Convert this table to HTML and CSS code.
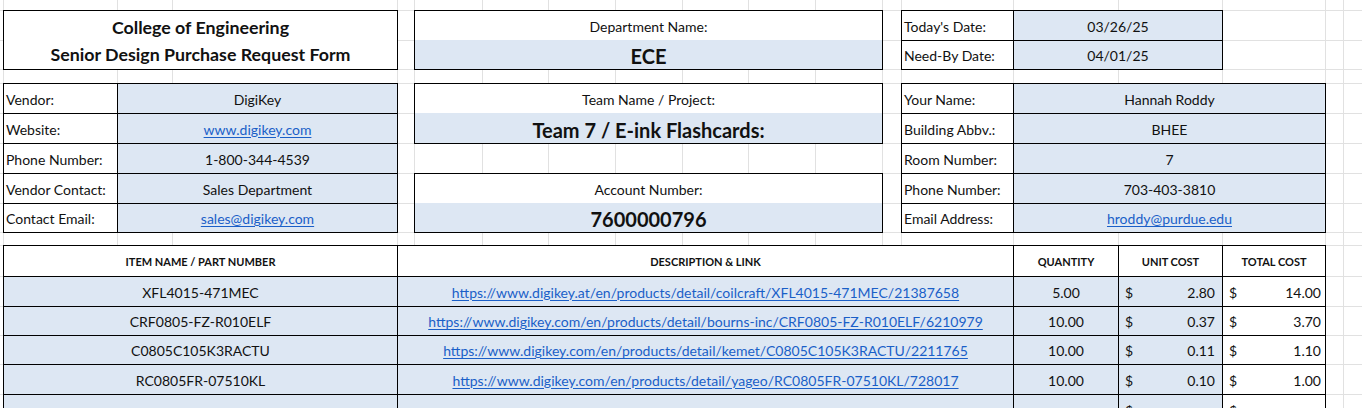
FILE: index.html
```html
<!DOCTYPE html>
<html lang="en">
<head>
<meta charset="utf-8">
<title>Senior Design Purchase Request Form</title>
<link rel="stylesheet" href="styles.css">
</head>
<body>
<main class="sheet">
  <section class="box title-box">
    <div class="cell title">College of Engineering</div>
    <div class="cell title second">Senior Design Purchase Request Form</div>
  </section>

  <section class="box stack dept-box">
    <div class="cell">Department Name:</div>
    <div class="cell fill big">ECE</div>
  </section>

  <section class="box pairs dates-box">
    <div class="cell label line">Today's Date:</div>
    <div class="cell fill line">03/26/25</div>
    <div class="cell label">Need-By Date:</div>
    <div class="cell fill">04/01/25</div>
  </section>

  <section class="box pairs five vendor-box">
    <div class="cell label line">Vendor:</div>
    <div class="cell fill line">DigiKey</div>
    <div class="cell label line">Website:</div>
    <div class="cell fill line"><a class="link" href="#">www.digikey.com</a></div>
    <div class="cell label line">Phone Number:</div>
    <div class="cell fill line">1-800-344-4539</div>
    <div class="cell label line">Vendor Contact:</div>
    <div class="cell fill line">Sales Department</div>
    <div class="cell label">Contact Email:</div>
    <div class="cell fill"><a class="link" href="#">sales@digikey.com</a></div>
  </section>

  <section class="box stack team-box">
    <div class="cell">Team Name / Project:</div>
    <div class="cell fill big">Team 7 / E-ink Flashcards:</div>
  </section>

  <section class="box stack account-box">
    <div class="cell">Account Number:</div>
    <div class="cell fill big">7600000796</div>
  </section>

  <section class="box pairs five person-box">
    <div class="cell label line">Your Name:</div>
    <div class="cell fill line">Hannah Roddy</div>
    <div class="cell label line">Building Abbv.:</div>
    <div class="cell fill line">BHEE</div>
    <div class="cell label line">Room Number:</div>
    <div class="cell fill line">7</div>
    <div class="cell label line">Phone Number:</div>
    <div class="cell fill line">703-403-3810</div>
    <div class="cell label">Email Address:</div>
    <div class="cell fill"><a class="link" href="#">hroddy@purdue.edu</a></div>
  </section>

  <section class="box items">
    <div class="th">ITEM NAME / PART NUMBER</div>
    <div class="th">DESCRIPTION &amp; LINK</div>
    <div class="th">QUANTITY</div>
    <div class="th">UNIT COST</div>
    <div class="th last">TOTAL COST</div>

    <div class="td fill">XFL4015-471MEC</div>
    <div class="td fill"><a class="link url" href="#">https://www.digikey.at/en/products/detail/coilcraft/XFL4015-471MEC/21387658</a></div>
    <div class="td fill">5.00</div>
    <div class="td fill money"><span>$</span><span>2.80</span></div>
    <div class="td money last"><span>$</span><span>14.00</span></div>

    <div class="td fill">CRF0805-FZ-R010ELF</div>
    <div class="td fill"><a class="link url" href="#">https://www.digikey.com/en/products/detail/bourns-inc/CRF0805-FZ-R010ELF/6210979</a></div>
    <div class="td fill">10.00</div>
    <div class="td fill money"><span>$</span><span>0.37</span></div>
    <div class="td money last"><span>$</span><span>3.70</span></div>

    <div class="td fill">C0805C105K3RACTU</div>
    <div class="td fill"><a class="link url" href="#">https://www.digikey.com/en/products/detail/kemet/C0805C105K3RACTU/2211765</a></div>
    <div class="td fill">10.00</div>
    <div class="td fill money"><span>$</span><span>0.11</span></div>
    <div class="td money last"><span>$</span><span>1.10</span></div>

    <div class="td fill">RC0805FR-07510KL</div>
    <div class="td fill"><a class="link url" href="#">https://www.digikey.com/en/products/detail/yageo/RC0805FR-07510KL/728017</a></div>
    <div class="td fill">10.00</div>
    <div class="td fill money"><span>$</span><span>0.10</span></div>
    <div class="td money last"><span>$</span><span>1.00</span></div>

    <div class="td fill"></div>
    <div class="td fill"></div>
    <div class="td fill"></div>
    <div class="td fill money"><span>$</span><span>-</span></div>
    <div class="td money last"><span>$</span><span>-</span></div>
  </section>
</main>
</body>
</html>
```

FILE: styles.css
```css
html, body {
  margin: 0;
  padding: 0;
  background: #fff;
}

body {
  height: 408px;
  overflow: hidden;
  font-family: "Lato", "Carlito", "Liberation Sans", sans-serif;
  font-size: 14px;
  color: #111;
}

.sheet {
  --g: linear-gradient(#e1e1e1, #e1e1e1);
  display: grid;
  width: 1362px;
  height: 424px;
  grid-template-columns: 3px 114px 55px 225px 17px 68px 66px 67px 67px 66px 67px 67px 19px 112px 105px 104px 103px 18px 19px;
  grid-template-rows: 10px 30px 29px 14px 30px 30px 30px 30px 29px 13px 31px 30px 29px 29px 30px 30px;
  background:
    var(--g) 3px 0 / 1px 100% no-repeat,
    var(--g) 117px 0 / 1px 100% no-repeat,
    var(--g) 172px 0 / 1px 100% no-repeat,
    var(--g) 397px 0 / 1px 100% no-repeat,
    var(--g) 414px 0 / 1px 100% no-repeat,
    var(--g) 482px 0 / 1px 100% no-repeat,
    var(--g) 548px 0 / 1px 100% no-repeat,
    var(--g) 615px 0 / 1px 100% no-repeat,
    var(--g) 682px 0 / 1px 100% no-repeat,
    var(--g) 748px 0 / 1px 100% no-repeat,
    var(--g) 815px 0 / 1px 100% no-repeat,
    var(--g) 882px 0 / 1px 100% no-repeat,
    var(--g) 901px 0 / 1px 100% no-repeat,
    var(--g) 1013px 0 / 1px 100% no-repeat,
    var(--g) 1118px 0 / 1px 100% no-repeat,
    var(--g) 1222px 0 / 1px 100% no-repeat,
    var(--g) 1325px 0 / 1px 100% no-repeat,
    var(--g) 1343px 0 / 1px 100% no-repeat,
    var(--g) 0 10px / 100% 1px no-repeat,
    var(--g) 0 40px / 100% 1px no-repeat,
    var(--g) 0 69px / 100% 1px no-repeat,
    var(--g) 0 83px / 100% 1px no-repeat,
    var(--g) 0 113px / 100% 1px no-repeat,
    var(--g) 0 143px / 100% 1px no-repeat,
    var(--g) 0 173px / 100% 1px no-repeat,
    var(--g) 0 203px / 100% 1px no-repeat,
    var(--g) 0 232px / 100% 1px no-repeat,
    var(--g) 0 245px / 100% 1px no-repeat,
    var(--g) 0 276px / 100% 1px no-repeat,
    var(--g) 0 306px / 100% 1px no-repeat,
    var(--g) 0 335px / 100% 1px no-repeat,
    var(--g) 0 364px / 100% 1px no-repeat,
    var(--g) 0 394px / 100% 1px no-repeat,
    #fff;
}

/* merged bordered blocks */
.box {
  display: grid;
  border: 1px solid #000;
  margin: 0 -1px -1px 0;
  background: #fff;
  min-width: 0;
  min-height: 0;
}

.title-box   { grid-column: 2 / 5;  grid-row: 2 / 4;  grid-template-rows: 29px 1fr; }
.dept-box    { grid-column: 6 / 13; grid-row: 2 / 4; }
.dates-box   { grid-column: 14 / 17; grid-row: 2 / 4; grid-template-rows: 30px 1fr; }
.vendor-box  { grid-column: 2 / 5;  grid-row: 5 / 10; }
.team-box    { grid-column: 6 / 13; grid-row: 5 / 7; }
.account-box { grid-column: 6 / 13; grid-row: 8 / 10; }
.person-box  { grid-column: 14 / 18; grid-row: 5 / 10; }
.items       { grid-column: 2 / 18; grid-row: 11 / 17; }

.stack { grid-template-rows: 29px 1fr; }
.pairs { grid-template-columns: 112px 1fr; }
.vendor-box.pairs { grid-template-columns: 114px 1fr; }
.five { grid-template-rows: 30px 30px 30px 30px 1fr; }

.cell {
  display: flex;
  align-items: center;
  justify-content: center;
  padding-top: 1px;
  box-sizing: border-box;
  white-space: nowrap;
  min-width: 0;
}

.label {
  justify-content: flex-start;
  padding-left: 2px;
  border-right: 1px solid #000;
}

.line { border-bottom: 1px solid #000; }

.fill { background: #dde7f3; }

.title {
  font-weight: 700;
  font-size: 17.8px;
  padding-top: 2px;
}

.title.second {
  padding-top: 0;
  padding-bottom: 2px;
}

.big {
  font-weight: 700;
  font-size: 20px;
  padding-top: 3px;
}

.link {
  color: #1a5fc8;
  text-decoration: underline;
  text-underline-offset: 2px;
  text-decoration-thickness: 1px;
}

/* item table */
.items {
  grid-template-columns: 394px 616px 105px 104px 1fr;
  grid-template-rows: 31px 30px 29px 29px 30px 30px;
}

.th, .td {
  display: flex;
  align-items: center;
  justify-content: center;
  box-sizing: border-box;
  border-right: 1px solid #000;
  border-bottom: 1px solid #000;
  white-space: nowrap;
  min-width: 0;
}

.th {
  font-weight: 700;
  font-size: 11px;
  padding-top: 1px;
}

.td {
  font-size: 14px;
  padding-top: 1px;
}

.th.last, .td.last { border-right: 0; }

.url { font-size: 14px; }

.money {
  justify-content: space-between;
  padding: 1px 7px 0 6px;
}

.money.last { padding-right: 4px; }
```
